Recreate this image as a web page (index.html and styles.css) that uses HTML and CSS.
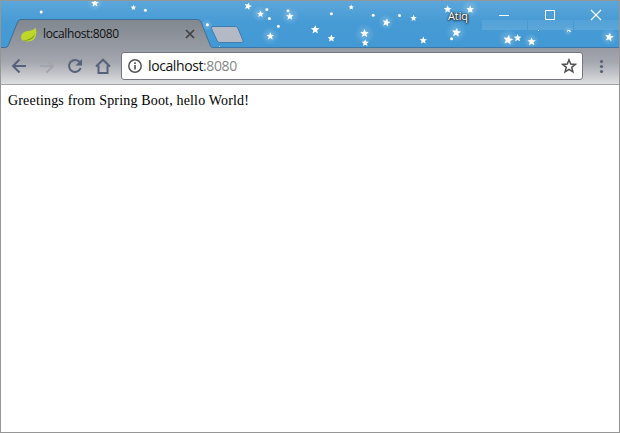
FILE: index.html
```html
<!DOCTYPE html>
<html lang="en">
<head>
<meta charset="utf-8">
<title>localhost:8080</title>
<link rel="stylesheet" href="styles.css">
</head>
<body>
<div class="window">
  <header class="tabstrip">
    <svg class="sky" viewBox="1 1 618 47" aria-hidden="true">
      <defs>
        <path id="s" d="M0-5.500 1.600-1.900 5.500-1.500 2.500 1.100 3.500 5 0 3-3.500 5-2.500 1.100-5.500-1.500-1.600-1.900Z"/>
        <radialGradient id="glow"><stop offset="0" stop-color="#fff" stop-opacity=".24"/><stop offset="1" stop-color="#fff" stop-opacity="0"/></radialGradient>
        <linearGradient id="tab" x1="0" y1="0" x2="0" y2="1"><stop offset="0" stop-color="#80878f"/><stop offset="1" stop-color="#969aa3"/></linearGradient>
        <linearGradient id="shine" x1="0" y1="0" x2="0" y2="1"><stop offset="0" stop-color="#fff" stop-opacity=".06"/><stop offset="1" stop-color="#fff" stop-opacity=".12"/></linearGradient>
      </defs>
      <g fill="url(#glow)">
        <circle cx="95" cy="3" r="8"/><circle cx="290" cy="16" r="9"/><circle cx="270" cy="36" r="9"/><circle cx="260" cy="14" r="8"/>
        <circle cx="364.5" cy="34" r="10"/><circle cx="386" cy="22" r="8"/><circle cx="456" cy="32" r="10"/><circle cx="470" cy="9" r="9"/>
        <circle cx="508" cy="39" r="10"/><circle cx="531" cy="41" r="8"/><circle cx="609" cy="37" r="9"/><circle cx="207" cy="25" r="6"/><circle cx="568" cy="31" r="5"/>
      </g>
      <g fill="#fff">
        <use href="#s" transform="translate(95 3) scale(.7)"/>
        <use href="#s" transform="translate(133.4 7.4) scale(.5)"/>
        <use href="#s" transform="translate(248 6) rotate(15) scale(.68)"/>
        <use href="#s" transform="translate(260.4 14) scale(.6)"/>
        <use href="#s" transform="translate(289.8 16.3) scale(.68)"/>
        <use href="#s" transform="translate(270.3 36) scale(.68)"/>
        <use href="#s" transform="translate(315.2 29.5) scale(.78)"/>
        <use href="#s" transform="translate(331.4 38.2) scale(.68)"/>
        <use href="#s" transform="translate(351.2 7.2) scale(.48)"/>
        <use href="#s" transform="translate(364.5 33.3) scale(.76)"/>
        <use href="#s" transform="translate(365.2 42.8) scale(.66)"/>
        <use href="#s" transform="translate(386.4 22.4) rotate(12) scale(.72)"/>
        <use href="#s" transform="translate(413.6 18) scale(.58)"/>
        <use href="#s" transform="translate(423.3 40.2) scale(.66)"/>
        <use href="#s" transform="translate(447.6 9.2) scale(.7)"/>
        <use href="#s" transform="translate(470.2 9.3) scale(.7)"/>
        <use href="#s" transform="translate(456.4 32.3) rotate(8) scale(.82)"/>
        <use href="#s" transform="translate(508.2 39.6) rotate(10) scale(.9)"/>
        <use href="#s" transform="translate(517.6 37.8) scale(.7)"/>
        <use href="#s" transform="translate(531.6 41.5) scale(.75)"/>
        <use href="#s" transform="translate(609.3 37) rotate(10) scale(.8)"/>
        <circle cx="41.2" cy="12" r="1.5"/><circle cx="145.4" cy="10.3" r="1.5"/><circle cx="207.4" cy="24.8" r="1.5"/>
        <circle cx="266.8" cy="9.4" r="1.5"/><circle cx="269.4" cy="18.4" r="1.5"/><circle cx="278.4" cy="26.2" r="1.5"/>
        <circle cx="288" cy="10.8" r="1.5"/><circle cx="331.4" cy="13.8" r="1.5"/><circle cx="373.2" cy="15.2" r="1.5"/>
        <circle cx="399.5" cy="15.4" r="1.5"/><circle cx="451.6" cy="38.7" r="1.5"/>
        <path d="M538 30h1v1h-1zM567 31l1-1h2l1 2h-1l-1-1h-1l-1 1z"/>
      </g>
      <path d="M482 20h45v10h-45zM528 20h45v10h-45zM574 20h45v10h-45z" fill="url(#shine)"/>
      <path d="M0 47.5H620" stroke="#3b78a9"/>
      <path d="M1 47.5H5.5Q7.500 47.500 8.300 45.500L17.600 22Q18.600 19.500 21 19.500H197.500Q200 19.500 201 22L210.300 45.500Q211 47.500 213 47.500V48H1Z" fill="url(#tab)"/>
      <path d="M1 47.500H5.500Q7.500 47.500 8.300 45.500L17.600 22Q18.600 19.500 21 19.500H197.500Q200 19.500 201 22L210.300 45.500Q211 47.500 213 47.500H1Z" fill="url(#tab)"/>
      <path d="M1 47.500H5.500Q7.500 47.500 8.300 45.500L17.600 22Q18.600 19.500 21 19.500H197.500Q200 19.500 201 22L210.300 45.500Q211 47.500 213 47.500" fill="none" stroke="#3f6f98"/>
      <path d="M213 26.500H235.500Q237 26.500 237.800 28L243 40.500Q243.500 42.500 241.500 42.500H219.500Q218 42.500 217.300 41L211.400 28.500Q211 26.500 213 26.500Z" fill="#b3bac6" stroke="#3d7cad"/>
      <path d="M219 46.500h1" stroke="#fff" stroke-opacity=".6"/>
    </svg>
    <div class="tab">
      <svg class="leaf" width="18" height="16" viewBox="0 0 18 16" aria-hidden="true">
        <path d="M15.500.5C16.800 4 17 9 14 12.300 11.500 15 6 15 2.600 13.600.5 11.500.6 7.500 3.500 5.500 7 3.200 13 4.500 15.500.5Z" fill="#bfd62a"/>
        <path d="M2.800 13.500C7 13 12.500 11.800 14.900 6.500 14.300 11.500 9.500 14.500 2.800 13.500Z" fill="#769a25"/>
      </svg>
      <span class="tab-title">localhost:8080</span>
      <svg class="close" width="10" height="10" viewBox="0 0 10 10"><path d="M1 1 9 9M9 1 1 9" stroke="#3f4144" stroke-width="1.700"/></svg>
    </div>
    <span class="user">Atiq</span>
    <div class="controls">
      <svg width="46" height="28" viewBox="482 1 46 28"><path d="M499 15.500h10" stroke="#fff"/></svg>
      <svg width="46" height="28" viewBox="528 1 46 28"><path d="M545.500 10.500h9v9h-9z" fill="none" stroke="#fff"/></svg>
      <svg width="45" height="28" viewBox="574 1 45 28"><path d="M591 10l10 10M601 10l-10 10" stroke="#fff" stroke-width="1.100"/></svg>
    </div>
  </header>
  <nav class="toolbar">
    <svg class="nav" width="120" height="36" viewBox="1 48 120 36" fill="none" stroke="#56627a" stroke-width="2">
      <path d="M26 66H13.500M19.500 59.500 13 66l6.500 6.500"/>
      <path d="M40 66h12.500M46.500 59.500 53 66l-6.500 6.500" stroke="#a3a5ad"/>
      <path d="M79.800 62.200A6 6 0 1 0 80.700 68"/><path d="M82 59v6.500h-6.500z" fill="#56627a" stroke="none"/>
      <path d="M96 66.500 103 59.700 110 66.500M98.500 65.500V73H107.500V65.500"/>
    </svg>
    <div class="omnibox">
      <svg width="14" height="14" viewBox="0 0 14 14"><circle cx="7" cy="7" r="6.200" fill="none" stroke="#555" stroke-width="1.500"/><path d="M7 6v4.500M7 3.300v1.600" stroke="#555" stroke-width="1.700"/></svg>
      <span class="url">localhost<span class="port">:8080</span></span>
      <svg class="bookmark" width="16" height="16" viewBox="0 0 16 16"><path d="M8 1.800 9.700 6.100 14.300 6.400 10.700 9.300 11.900 13.800 8 11.300 4.100 13.800 5.300 9.300 1.700 6.400 6.300 6.100Z" fill="none" stroke="#505050" stroke-width="1.500"/></svg>
    </div>
    <svg class="menu" width="36" height="36" viewBox="583 48 36 36" fill="#56627a"><circle cx="601.500" cy="61.500" r="1.600"/><circle cx="601.500" cy="66.500" r="1.600"/><circle cx="601.500" cy="71.500" r="1.600"/></svg>
  </nav>
  <main class="page">Greetings from Spring Boot, hello World!</main>
</div>
</body>
</html>
```
FILE: styles.css
```css
* { box-sizing: border-box; }
body { margin: 0; }
.window {
  width: 620px;
  height: 433px;
  border: 1px solid #969696;
  background: #fff;
  display: flex;
  flex-direction: column;
  overflow: hidden;
}
svg { display: block; flex: none; }
.tabstrip {
  position: relative;
  height: 47px;
  flex: none;
  display: flex;
  align-items: flex-start;
  background: linear-gradient(#5ba6da, #479bd5 45%, #4299d4);
}
.sky { position: absolute; inset: 0; width: 618px; height: 47px; }
.tab {
  position: relative;
  width: 212px;
  height: 28px;
  margin-top: 19px;
  padding: 0 18px 0 19px;
  display: flex;
  align-items: center;
}
.leaf { margin-top: 1px; }
.tab-title {
  margin-left: 5px;
  font: 12px/16px "Open Sans", sans-serif;
  letter-spacing: -0.36px;
  color: #111;
}
.close { margin-left: auto; }
.user {
  position: relative;
  margin: 7px 0 0 auto;
  width: 34px;
  font: 11px/16px "Open Sans", sans-serif;
  letter-spacing: -0.1px;
  color: #fff;
  text-shadow: 0 0 2px #222, 0 1px 2px #222, 1px 0 1px #333;
}
.controls { position: relative; display: flex; }
.toolbar {
  height: 37px;
  flex: none;
  display: flex;
  align-items: flex-start;
  background: linear-gradient(#969aa3, #a6a8b0 40%, #dedfe1);
  border-bottom: 1px solid #a2a3a5;
}
.omnibox {
  width: 462px;
  height: 28px;
  margin-top: 4px;
  padding: 0 5px 0 6px;
  display: flex;
  align-items: center;
  border: 1px solid #747780;
  border-radius: 3px;
  background: #fff;
}
.url {
  margin-left: 6px;
  font: 14px/20px "Open Sans", sans-serif;
  letter-spacing: -0.4px;
  color: #111;
}
.port { color: #858585; }
.bookmark { margin-left: auto; }
.page {
  padding: 8px 7px;
  font: 14px/16px "Liberation Serif", serif;
  letter-spacing: 0.17px;
  color: #000;
}
```
